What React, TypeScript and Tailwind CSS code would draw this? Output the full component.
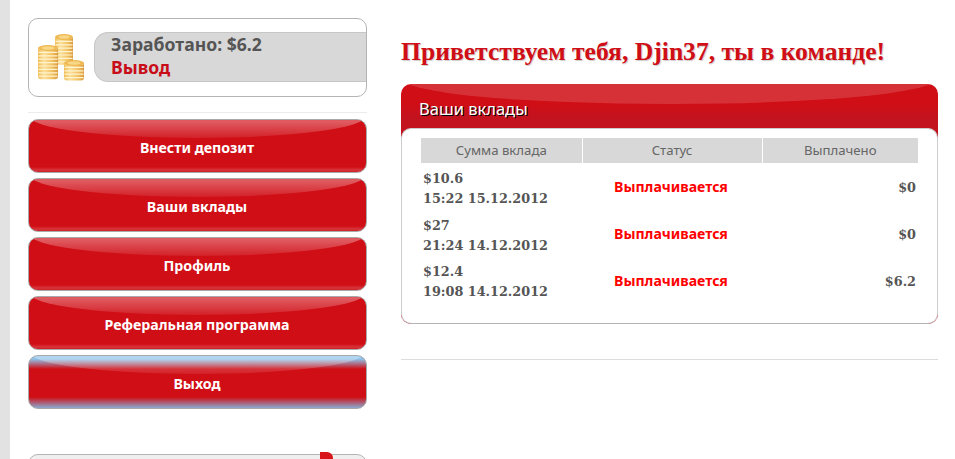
const menuItems = [
  { label: "Внести депозит" },
  { label: "Ваши вклады" },
  { label: "Профиль" },
  { label: "Реферальная программа" },
  { label: "Выход", active: true },
];

const deposits = [
  { amount: "$10.6", date: "15:22 15.12.2012", paid: "$0" },
  { amount: "$27", date: "21:24 14.12.2012", paid: "$0" },
  { amount: "$12.4", date: "19:08 14.12.2012", paid: "$6.2" },
];

function CoinStack({ x, top, count, width = 20 }: { x: number; top: number; count: number; width?: number }) {
  const coins = Array.from({ length: count }, (_, i) => top + 4 + i * 3.4);
  const bottom = coins[coins.length - 1] + 3;
  return (
    <g>
      <rect x={x} y={top + 2} width={width} height={bottom - top - 2} rx="3" fill="url(#coin)" />
      {coins.map((y) => (
        <line key={y} x1={x + 0.5} x2={x + width - 0.5} y1={y} y2={y} stroke="#fff3cf" strokeWidth="1.2" />
      ))}
      <ellipse cx={x + width / 2} cy={top + 3} rx={width / 2} ry="3" fill="#eeb850" />
      <ellipse cx={x + width / 2} cy={top + 3} rx={width / 2 - 3.5} ry="1.7" fill="#f8d888" />
    </g>
  );
}

function Coins() {
  return (
    <svg width="47" height="48" viewBox="0 0 47 48" className="shrink-0">
      <defs>
        <linearGradient id="coin" x1="0" x2="1" y1="0" y2="0">
          <stop offset="0" stopColor="#f0bb55" />
          <stop offset="0.3" stopColor="#fbe09a" />
          <stop offset="0.7" stopColor="#f2c264" />
          <stop offset="1" stopColor="#d99a3c" />
        </linearGradient>
      </defs>
      <CoinStack x={17} top={0} count={8} width={18} />
      <CoinStack x={0} top={11} count={9} />
      <CoinStack x={26} top={26} count={5} />
    </svg>
  );
}

function MenuButton({ label, active }: { label: string; active?: boolean }) {
  return (
    <a
      className={
        "relative flex h-[54px] shrink-0 items-center justify-center overflow-hidden rounded-[10px] border border-[#a9a9a9] text-[14.2px] font-bold text-white " +
        (active
          ? "bg-[linear-gradient(180deg,#8dc3ea_0px,#8dc3ea_3px,#d00e16_13px,#d00e16_41px,#8aa9cf_52px)]"
          : "bg-[linear-gradient(180deg,#d00e16_0px,#d00e16_47px,#d8353c_50px,#c9141c_53px)]")
      }
    >
      <span className="absolute top-[-26px] left-0 h-[44px] w-[337px] rounded-[50%] bg-[linear-gradient(180deg,#ffffff00_50%,#ffffff55_61%,#ffffff14_100%)]" />
      <span className="relative pt-[3px] pr-[1px]">{label}</span>
    </a>
  );
}

function Sidebar() {
  return (
    <aside className="ml-[18px] flex w-[339px] shrink-0 flex-col pt-[18px]">
      <div className="flex h-[79px] shrink-0 items-center overflow-hidden rounded-[10px] border border-[#b4b4b4] pl-[9px]">
        <Coins />
        <div className="mt-[-1px] ml-[9px] h-[50px] flex-1 rounded-l-[14px] border border-r-0 border-[#c6c6c6] bg-[#d8d8d8] pl-[16px] text-[17.6px] leading-[23px] font-bold">
          <div className="text-[#555555]">Заработано: $6.2</div>
          <a className="text-[#c80d18]">Вывод</a>
        </div>
      </div>
      <div className="mt-[15px] mb-[6px] h-px shrink-0 bg-[#ececec]" />
      <nav className="flex shrink-0 flex-col gap-[5px]">
        {menuItems.map((item) => (
          <MenuButton key={item.label} label={item.label} active={item.active} />
        ))}
      </nav>
      <div className="relative mt-[45px] h-[40px] shrink-0 rounded-[10px] border border-[#b4b4b4] bg-[#efefef]">
        <span className="absolute top-[-3px] right-[33px] h-[12px] w-[13px] rounded-tr-[6px] bg-[#d9161c]" />
      </div>
    </aside>
  );
}

function DepositsPanel() {
  return (
    <section className="relative mt-[24px] h-[240px] overflow-hidden rounded-[10px] bg-[linear-gradient(180deg,#d00e16_0px,#d00e16_20px,#c2131f_34px,#c2131f_44px)]">
      <span className="absolute top-[-30px] left-[2px] h-[50px] w-[533px] rounded-[50%] bg-[#ffffff26]" />
      <h2 className="relative h-[44px] pt-[14px] pl-[18px] text-[16.5px] leading-[22px] font-normal text-white [text-shadow:1px_1px_0_#000]">
        Ваши вклады
      </h2>
      <div className="relative h-[196px] rounded-[10px] border border-[#cccccc] border-b-[#b4b4b4] bg-white px-[19px] pt-[9px]">
        <table className="w-[497px] table-fixed border-collapse">
          <thead>
            <tr className="h-[25px] bg-[#d8d8d8] text-[13.2px] text-[#666666]">
              <th className="w-[161px] border-r border-white font-normal">Сумма вклада</th>
              <th className="w-[180px] border-r border-white font-normal">Статус</th>
              <th className="font-normal">Выплачено</th>
            </tr>
          </thead>
          <tbody>
            {deposits.map((d) => (
              <tr key={d.date} className="h-[46.7px] align-middle">
                <td className="pt-[5px] pl-[2px] font-['DejaVu_Serif',serif] text-[12.8px] leading-[20px] font-bold text-[#555555]">
                  <div>{d.amount}</div>
                  <div>{d.date}</div>
                </td>
                <td className="pt-[1px] pr-[2px] text-center text-[14.1px] font-bold text-[#ff0000]">Выплачивается</td>
                <td className="pt-[3px] pr-[2px] text-right font-['DejaVu_Serif',serif] text-[12.8px] font-bold text-[#555555]">
                  {d.paid}
                </td>
              </tr>
            ))}
          </tbody>
        </table>
      </div>
    </section>
  );
}

export default function App() {
  return (
    <div className="flex h-[459px] w-[955px] overflow-hidden bg-white font-['Noto_Sans',sans-serif]">
      <div className="w-[10px] shrink-0 bg-[#e2e2e2]" />
      <Sidebar />
      <main className="ml-[34px] w-[537px] shrink-0 pt-[37px]">
        <h1 className="h-[23px] font-['Liberation_Serif',serif] text-[25.6px] leading-[30px] font-bold whitespace-nowrap text-[#d00e16] [text-shadow:1px_1px_1px_#cccccc]">
          Приветствуем тебя, Djin37, ты в команде!
        </h1>
        <DepositsPanel />
        <div className="mt-[35px] h-px bg-[#dddddd]" />
      </main>
    </div>
  );
}
